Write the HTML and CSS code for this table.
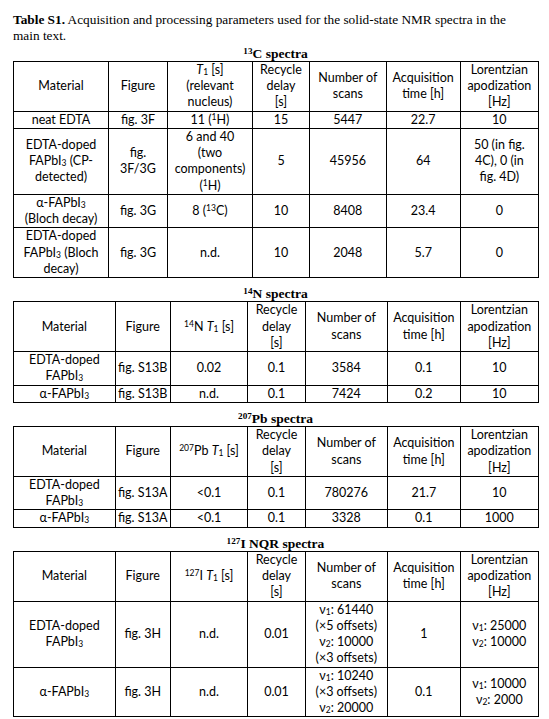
FILE: index.html
```html
<!DOCTYPE html>
<html lang="en">
<head>
<meta charset="utf-8">
<title>Table S1</title>
<link rel="stylesheet" href="styles.css">
</head>
<body>
<div class="page">
  <p class="caption"><b>Table S1.</b> Acquisition and processing parameters used for the solid-state NMR spectra in the main text.</p>

  <section class="block first">
    <h2 class="title"><sup>13</sup>C spectra</h2>
    <table class="grid grid-c">
      <colgroup>
        <col class="w-mat"><col class="w-fig"><col class="w-t1"><col class="w-rd"><col class="w-ns"><col class="w-at"><col class="w-la">
      </colgroup>
      <tr>
        <td>Material</td><td>Figure</td><td><i>T</i><sub>1</sub> [s]<br>(relevant<br>nucleus)</td><td>Recycle<br>delay<br>[s]</td><td>Number of<br>scans</td><td>Acquisition<br>time [h]</td><td>Lorentzian<br>apodization<br>[Hz]</td>
      </tr>
      <tr>
        <td>neat EDTA</td><td>fig. 3F</td><td>11 (<sup>1</sup>H)</td><td>15</td><td>5447</td><td>22.7</td><td>10</td>
      </tr>
      <tr>
        <td>EDTA-doped<br>FAPbI<sub>3</sub> (CP-<br>detected)</td><td>fig.<br>3F/3G</td><td>6 and 40<br>(two<br>components)<br>(<sup>1</sup>H)</td><td>5</td><td>45956</td><td>64</td><td>50 (in fig.<br>4C), 0 (in<br>fig. 4D)</td>
      </tr>
      <tr>
        <td>α-FAPbI<sub>3</sub><br>(Bloch decay)</td><td>fig. 3G</td><td>8 (<sup>13</sup>C)</td><td>10</td><td>8408</td><td>23.4</td><td>0</td>
      </tr>
      <tr>
        <td>EDTA-doped<br>FAPbI<sub>3</sub> (Bloch<br>decay)</td><td>fig. 3G</td><td>n.d.</td><td>10</td><td>2048</td><td>5.7</td><td>0</td>
      </tr>
    </table>
  </section>

  <section class="block">
    <h2 class="title"><sup>14</sup>N spectra</h2>
    <table class="grid grid-x">
      <colgroup>
        <col class="w-mat"><col class="w-fig"><col class="w-t1"><col class="w-rd"><col class="w-ns"><col class="w-at"><col class="w-la">
      </colgroup>
      <tr>
        <td>Material</td><td>Figure</td><td><sup>14</sup>N <i>T</i><sub>1</sub> [s]</td><td>Recycle<br>delay<br>[s]</td><td>Number of<br>scans</td><td>Acquisition<br>time [h]</td><td>Lorentzian<br>apodization<br>[Hz]</td>
      </tr>
      <tr>
        <td>EDTA-doped<br>FAPbI<sub>3</sub></td><td>fig. S13B</td><td>0.02</td><td>0.1</td><td>3584</td><td>0.1</td><td>10</td>
      </tr>
      <tr>
        <td>α-FAPbI<sub>3</sub></td><td>fig. S13B</td><td>n.d.</td><td>0.1</td><td>7424</td><td>0.2</td><td>10</td>
      </tr>
    </table>
  </section>

  <section class="block">
    <h2 class="title"><sup>207</sup>Pb spectra</h2>
    <table class="grid grid-x">
      <colgroup>
        <col class="w-mat"><col class="w-fig"><col class="w-t1"><col class="w-rd"><col class="w-ns"><col class="w-at"><col class="w-la">
      </colgroup>
      <tr>
        <td>Material</td><td>Figure</td><td><sup>207</sup>Pb <i>T</i><sub>1</sub> [s]</td><td>Recycle<br>delay<br>[s]</td><td>Number of<br>scans</td><td>Acquisition<br>time [h]</td><td>Lorentzian<br>apodization<br>[Hz]</td>
      </tr>
      <tr>
        <td>EDTA-doped<br>FAPbI<sub>3</sub></td><td>fig. S13A</td><td>&lt;0.1</td><td>0.1</td><td>780276</td><td>21.7</td><td>10</td>
      </tr>
      <tr>
        <td>α-FAPbI<sub>3</sub></td><td>fig. S13A</td><td>&lt;0.1</td><td>0.1</td><td>3328</td><td>0.1</td><td>1000</td>
      </tr>
    </table>
  </section>

  <section class="block">
    <h2 class="title"><sup>127</sup>I NQR spectra</h2>
    <table class="grid grid-x">
      <colgroup>
        <col class="w-mat"><col class="w-fig"><col class="w-t1"><col class="w-rd"><col class="w-ns"><col class="w-at"><col class="w-la">
      </colgroup>
      <tr>
        <td>Material</td><td>Figure</td><td><sup>127</sup>I <i>T</i><sub>1</sub> [s]</td><td>Recycle<br>delay<br>[s]</td><td>Number of<br>scans</td><td>Acquisition<br>time [h]</td><td>Lorentzian<br>apodization<br>[Hz]</td>
      </tr>
      <tr>
        <td>EDTA-doped<br>FAPbI<sub>3</sub></td><td>fig. 3H</td><td>n.d.</td><td>0.01</td><td>ν<sub>1</sub>: 61440<br>(×5 offsets)<br>ν<sub>2</sub>: 10000<br>(×3 offsets)</td><td>1</td><td>ν<sub>1</sub>: 25000<br>ν<sub>2</sub>: 10000</td>
      </tr>
      <tr>
        <td>α-FAPbI<sub>3</sub></td><td>fig. 3H</td><td>n.d.</td><td>0.01</td><td>ν<sub>1</sub>: 10240<br>(×3 offsets)<br>ν<sub>2</sub>: 20000</td><td>0.1</td><td>ν<sub>1</sub>: 10000<br>ν<sub>2</sub>: 2000</td>
      </tr>
    </table>
  </section>
</div>
</body>
</html>
```

FILE: styles.css
```css
html, body {
  margin: 0;
  padding: 0;
  background: #ffffff;
  color: #000000;
}

.page {
  padding: 12px 0 0 13px;
  width: 525px;
}

.caption {
  margin: 0;
  max-width: 512px;
  font-family: "Liberation Serif", "Times New Roman", serif;
  font-size: 13.3px;
  line-height: 15.5px;
}

.title {
  margin: 9.3px 0 0 0;
  width: 525px;
  text-align: center;
  font-family: "Liberation Serif", "Times New Roman", serif;
  font-weight: bold;
  font-size: 13.5px;
  line-height: 14px;
}

.first .title {
  margin-top: 3.8px;
}

.title sup {
  font-size: 0.68em;
  line-height: 0;
  vertical-align: 0.45em;
}

.grid {
  width: 525px;
  table-layout: fixed;
  border-collapse: collapse;
  font-family: Lato, "Noto Sans", sans-serif;
  font-size: 12.5px;
  line-height: 16.25px;
}

.grid td {
  border: 1px solid #000000;
  padding: 0 1px;
  text-align: center;
  vertical-align: middle;
  white-space: nowrap;
}

.grid sup,
.grid sub {
  font-size: 0.68em;
  line-height: 0;
}

.grid sup {
  vertical-align: 0.5em;
}

.grid sub {
  vertical-align: -0.15em;
}

.grid-c .w-mat { width: 95px; }
.grid-c .w-fig { width: 59px; }
.grid-c .w-t1 { width: 85px; }
.grid-c .w-rd { width: 57px; }
.grid-c .w-ns { width: 76.7px; }
.grid-c .w-at { width: 74px; }
.grid-c .w-la { width: 78.3px; }

.grid-x .w-mat { width: 101.7px; }
.grid-x .w-fig { width: 55px; }
.grid-x .w-t1 { width: 77.7px; }
.grid-x .w-rd { width: 57.3px; }
.grid-x .w-ns { width: 82.3px; }
.grid-x .w-at { width: 72.7px; }
.grid-x .w-la { width: 78.3px; }
```
